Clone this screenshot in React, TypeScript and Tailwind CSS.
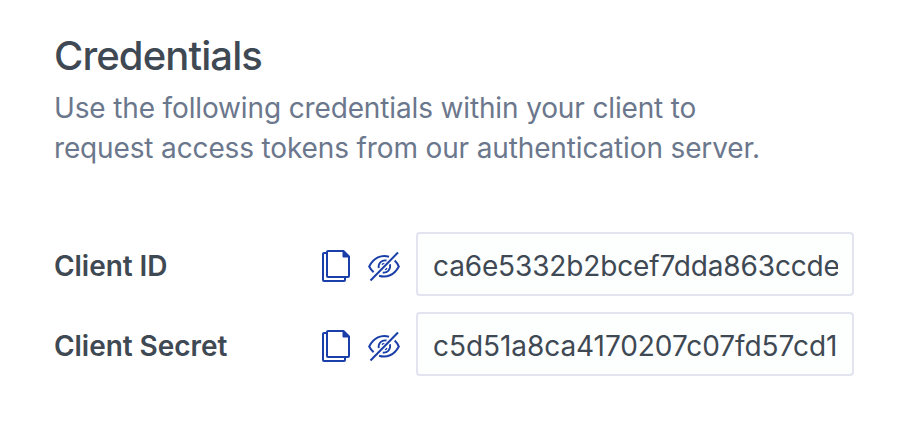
import type { ReactNode } from "react";

function IconButton({ label, children }: { label: string; children: ReactNode }) {
  return (
    <button type="button" aria-label={label} className="block h-9 w-9 text-[#1b3fa8]">
      {children}
    </button>
  );
}

function CopyIcon() {
  return (
    <svg viewBox="0 0 36 36" className="h-9 w-9" fill="none" stroke="currentColor" strokeWidth="2">
      <path d="M9 5H6a1 1 0 0 0-1 1v26a1 1 0 0 0 1 1h20a1 1 0 0 0 1-1v-3" />
      <path d="M25.500 3H10a1 1 0 0 0-1 1v24a1 1 0 0 0 1 1h20a1 1 0 0 0 1-1V8.500z" />
      <path d="M25 2.500v6.500h6.500z" fill="currentColor" stroke="currentColor" strokeWidth="1" />
    </svg>
  );
}

function HiddenIcon() {
  return (
    <svg viewBox="0 0 36 36" className="h-9 w-9" fill="none" stroke="currentColor" strokeWidth="2">
      <path d="M32 4.500 4.500 32.500" />
      <path d="M23 8.700C15.500 6.400 7.500 9.500 3.200 18.500c1.200 2.400 2.600 4.200 4.400 5.600" />
      <path d="M28.700 12.400c1.600 1.500 3 3.500 4.100 6.100-4.500 8.600-12.300 11.700-19.700 9.300" />
      <path d="M20.500 12.500c-4.800-.8-8.600 2.700-7.800 7.700" strokeWidth="1.800" />
      <path d="M24 16.300c1.100 5-2.600 8.900-7.300 8.200" strokeWidth="1.800" />
      <path d="M18.300 15.300c-1 0-1.900.6-2.300 1.500" strokeWidth="1.300" />
      <path d="M18.900 21.600c1-.2 1.700-.8 2.100-1.700" strokeWidth="1.300" />
    </svg>
  );
}

function CredentialRow({ label, value, tracking }: { label: string; value: string; tracking: string }) {
  return (
    <div className="flex h-16 items-center">
      <div className="w-[264px] pt-1 text-[28px] leading-10 font-semibold tracking-[-0.05px]">{label}</div>
      <div className="flex gap-3 pt-1">
        <IconButton label="Copy"><CopyIcon /></IconButton>
        <IconButton label="Show"><HiddenIcon /></IconButton>
      </div>
      <input
        readOnly
        aria-label={label}
        value={value}
        className={`ml-[14px] h-16 w-[438px] rounded border-2 border-[#e2e4ef] bg-[#fdfefe] pt-1 pr-[14px] pl-[15px] text-[28px] outline-none ${tracking}`}
      />
    </div>
  );
}

export default function App() {
  return (
    <main className="h-[422px] bg-white pt-8 pl-[54px] font-['Inter','Liberation_Sans',sans-serif] text-[#3f4954]">
      <h1 className="text-[40px] leading-[48px] font-medium tracking-[-0.9px]">Credentials</h1>
      <p className="mt-2 text-[28px] leading-10 tracking-[-0.14px] text-[#6b778c]">
        Use the following credentials within your client to<br />
        request access tokens from our authentication server.
      </p>
      <div className="mt-16 flex flex-col gap-4">
        <CredentialRow label="Client ID" value="ca6e5332b2bcef7dda863ccde" tracking="tracking-[-0.14px]" />
        <CredentialRow label="Client Secret" value="c5d51a8ca4170207c07fd57cd1" tracking="tracking-[-0.06px]" />
      </div>
    </main>
  );
}
